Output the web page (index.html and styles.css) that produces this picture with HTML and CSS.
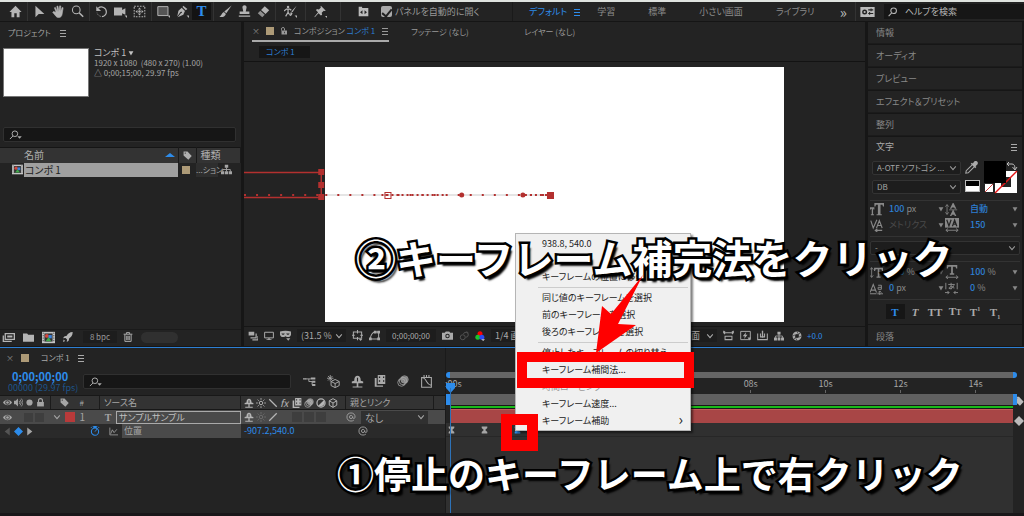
FILE: index.html
```html
<!DOCTYPE html>
<html lang="ja">
<head>
<meta charset="utf-8">
<title>コンポ 1</title>
<link rel="stylesheet" href="styles.css">
</head>
<body>
<svg class="sprite" aria-hidden="true">
  <symbol id="home" viewBox="0 0 16 16"><path d="M8 1 0.500 8.500H3V15H6.500V10h3v5H13V8.500h2.500z"/></symbol>
  <symbol id="arrow" viewBox="0 0 16 16"><path d="M3 1v14l4-4h7z"/></symbol>
  <symbol id="hand" viewBox="0 0 16 16"><path d="M5 9 3 3.500l1-.7L6.500 8 6 1.500l1.300-.2L8.500 8 9.500 1l1.300.2L10.500 8 12.500 3l1.200.4L12.500 11c-.5 3-1.500 4-4 4.500C6 15.500 5 14 3.800 12.500L.8 9l1-1z" stroke="currentColor" stroke-width=".7"/></symbol>
  <symbol id="zoom" viewBox="0 0 16 16"><g fill="none" stroke="currentColor"><circle cx="6.500" cy="6" r="4.700" stroke-width="1.300"/><path d="m10 9.500 5 5" stroke-width="2"/></g></symbol>
  <symbol id="rotate" viewBox="0 0 16 16"><path d="M4 4a6 6 0 0 1 10 4.500c0 3-2.500 5.700-5.500 5.700" fill="none" stroke="currentColor" stroke-width="1.500"/><path d="M1.500 1.500v6h6z"/><path d="M7 14c-2-.5-4-2-4.500-4.500" fill="none" stroke="currentColor" stroke-dasharray="1.500 1.500"/></symbol>
  <symbol id="camera" viewBox="0 0 16 16"><path d="M0 3h10v3l4-2v8l-4-2v3H0zM13 13h3v3z"/></symbol>
  <symbol id="anchor" viewBox="0 0 16 16"><path d="M1.500 1.500h13v13h-13z" fill="none" stroke="currentColor" stroke-dasharray="2 1.500" stroke-width="1.300"/><path d="m8 3 2 2.500H6zM8 13l2-2.500H6zM3 8l2.500-2v4zM13 8l-2.500-2v4z"/><circle cx="8" cy="8" r="1.500"/></symbol>
  <symbol id="rect" viewBox="0 0 16 16"><path d="M1 2h12.500v11H1z" fill="#555" stroke="currentColor" stroke-width="1.200"/><path d="M13 13h3v3z"/></symbol>
  <symbol id="pen" viewBox="0 0 16 16"><path d="m9 1 5 4-2 1.500-4-4zM7 3.500l4 4L9 12l-7 3 4-5 1.500-.5-1-1.500-1.200.8L1.500 14 3 7z"/><path d="M13 13h3v3z"/></symbol>
  <symbol id="brush" viewBox="0 0 16 16"><path d="M15.500.5 9 10 6.500 8zM6 8.500 8.500 11C7 14.500 4 15.500.5 14.500 3 13 3 10 6 8.500z"/></symbol>
  <symbol id="stamp" viewBox="0 0 16 16"><path d="M6.500 8 5.500 3.500a2.600 2.600 0 1 1 5 0L9.500 8H14v3H2V8zM1 13h14v1.500H1z"/></symbol>
  <symbol id="eraser" viewBox="0 0 16 16"><path d="m9.500 1.500 5.500 5-4.500 4.500L5 6z"/><path d="m4 7 5.500 5-3 3L1 10z" opacity=".75"/></symbol>
  <symbol id="roto" viewBox="0 0 16 16"><path d="M15.500 1 10.500 9 9 8zM8.500 8.500l2 1.500c-.5 2.500-2 3.500-4 3.500 1.500-1 1-3.500 2-5zM13 13h3v3z"/><circle cx="5" cy="2.500" r="1.500"/><path d="M0 7.500 3 5h4l2 1.500M5 5v4l-3 5M5 9l2 3" fill="none" stroke="currentColor" stroke-width="1.500"/></symbol>
  <symbol id="pin" viewBox="0 0 16 16"><path d="m8.500 1 6 6-1.500.5-1-.5-2.500 2.500.5 2.500-1.500 1L5.500 10 1 15l-.5-.5L5 9 2.500 6.500l1-1.500L6 5.500 8.500 3 8 2zM13.500 13.500H16V16z"/></symbol>
  <symbol id="snap" viewBox="0 0 16 16"><path d="M1 1h5v2h9v12H1z"/><path d="M6.500 6v6L3 9zM9.500 6v6L13 9z" fill="#232323"/></symbol>
  <symbol id="menu" viewBox="0 0 8 8"><path d="M1 1h6v1H1zM1 4h6v1H1zM1 7h6v1H1z"/></symbol>
  <symbol id="card" viewBox="0 0 20 14"><path d="M0 0h20v14H0z"/><circle cx="6" cy="7" r="2.500" fill="none" stroke="#232323" stroke-width="2"/><path d="M11 4h7M11 9h7M15 2v4M13 7v4" stroke="#232323" stroke-width="1.500"/></symbol>
  <symbol id="search" viewBox="0 0 16 16"><g fill="none" stroke="currentColor" stroke-width="1.700"><circle cx="9" cy="6" r="4.500"/><path d="m6 9.500-5 5"/></g></symbol>
  <symbol id="searchd" viewBox="0 0 20 16"><g fill="none" stroke="currentColor" stroke-width="1.600"><circle cx="9" cy="6" r="4.500"/><path d="m6 9.500-5 5"/></g><path d="M13 10h7l-3.500 4z"/></symbol>
  <symbol id="lock" viewBox="0 0 16 16"><path d="M2 7h12v8H2z"/><path d="M4.500 7V4.500a3.500 3.500 0 0 1 7 0V7" fill="none" stroke="currentColor" stroke-width="2"/></symbol>
  <symbol id="unlock" viewBox="0 0 16 16"><path d="M3 7h11v8H3z"/><path d="M3 7V4.500a3 3 0 0 1 6-1V7" fill="none" stroke="currentColor" stroke-width="2"/><path d="M8 9.500h1.500v3H8z" fill="#232323"/></symbol>
  <symbol id="tag" viewBox="0 0 16 16"><path fill-rule="evenodd" d="M1 1h7l7.500 8-6 6.500L1 8zm3 1.500a1.200 1.200 0 1 0 0 2.500 1.200 1.200 0 0 0 0-2.500z"/></symbol>
  <symbol id="comp" viewBox="0 0 16 16"><path d="M0 1h16v14H0z" fill="#c4c4c4"/><path d="M1.500 2v12M14.500 2v12" stroke="#333" stroke-dasharray="1.500 1.500"/><path d="M3 3h10v10H3z" fill="#333"/><circle cx="6" cy="6" r="2.400" fill="#d5493f"/><path d="M8 5h4v4H8z" fill="#3b82dd"/><path d="m8 7.500 3.500 5h-7z" fill="#40a94b"/></symbol>
  <symbol id="tree" viewBox="0 0 16 16"><path d="M5.500 1h5v4.500h-5zM0 10.500h4.700V15H0zM5.700 10.500h4.600V15H5.700zM11.300 10.500H16V15h-4.700z"/><path d="M8 5v6M2.500 11V8h11v3" fill="none" stroke="currentColor" stroke-width="1.300"/></symbol>
  <symbol id="footage" viewBox="0 0 20 16"><path d="M5 2h14v9H5z" fill="none" stroke="currentColor" stroke-width="2"/><path d="M3 5v8h12v1.800H1V5zM8 5h8v3H8z"/></symbol>
  <symbol id="folder" viewBox="0 0 16 16"><path d="M0 2h6l1.500 2H16v10H0z"/></symbol>
  <symbol id="rocket" viewBox="0 0 16 16"><path d="M15.500 0c-5 0-8 3-9.500 6L2 7l-2 3 4-.5 2.500 2.500L6 16l3-2 1-4c3-1.500 5.500-5 5.500-10zM1 12l2.500 2.500L0 16z"/></symbol>
  <symbol id="trash" viewBox="0 0 16 16"><path d="M1 3.500h14M5.500 3V1h5v2M3 4v11h10V4M6 6v7M8 6v7M10 6v7" fill="none" stroke="currentColor" stroke-width="1.500"/></symbol>
  <symbol id="frames" viewBox="0 0 16 16"><path d="M1 1h9v6H1zM12 4v6H4v1.800h10V4zM15 8v5H7v2h9V8z"/></symbol>
  <symbol id="monitor" viewBox="0 0 16 16"><path d="M1 2h14v9H1z" fill="none" stroke="currentColor" stroke-width="1.600"/><path d="M7 11h2v2h3v1.500H4V13h3z"/></symbol>
  <symbol id="mask" viewBox="0 0 16 16"><path fill-rule="evenodd" d="M0 2c5-1 11-1 16 0v5c-1 4-5 4-8 2-3 2-7 2-8-2zm2 3c1 2.500 4 2.500 5 0zm7 0c1 2.500 4 2.500 5 0zM9 12h6l-3 3.500z"/></symbol>
  <symbol id="grid" viewBox="0 0 16 16"><path d="M2 3h12v9H2zM8 0v5M8 10v5M0 7.500h4M12 7.500h4" fill="none" stroke="currentColor" stroke-width="1.500"/><path d="M10 13h5l-2.500 3z"/></symbol>
  <symbol id="shape" viewBox="0 0 16 16"><path d="M2 13C2 8 5 3 9 3h5v10z" fill="none" stroke="currentColor" stroke-width="1.500"/><path d="M0 11h4v4H0zM7 1h4v4H7zM12 1h4v4h-4zM12 11h4v4h-4z"/></symbol>
  <symbol id="photo" viewBox="0 0 16 16"><path fill-rule="evenodd" d="M0 4h4l1.500-2h5L12 4h4v10H0zm8 1.500a3.200 3.200 0 1 0 0 6.500 3.200 3.200 0 0 0 0-6.500z"/><circle cx="8" cy="8.700" r="1.700"/></symbol>
  <symbol id="chain" viewBox="0 0 16 16"><g fill="none" stroke="currentColor" stroke-width="1.600"><circle cx="6" cy="10" r="4"/><path d="M7 5a4 4 0 1 1 4 5M12 1l3 2"/></g></symbol>
  <symbol id="rgb" viewBox="0 0 16 16"><circle cx="8" cy="4.500" r="4" fill="#f00"/><circle cx="4.500" cy="10" r="4" fill="#1bc52a"/><circle cx="11" cy="10" r="4" fill="#2b49f0"/><path d="M10 13h6l-3 3z" fill="#ccc"/></symbol>
  <symbol id="chev" viewBox="0 0 10 10"><path d="m1.500 3 3.500 4 3.500-4" fill="none" stroke="currentColor" stroke-width="1.300"/></symbol>
  <symbol id="aspect" viewBox="0 0 16 16"><path d="M1 4h14M3 2 1 4l2 2M13 2l2 2-2 2M3 9h10v5H3zM1 1v3M15 1v3" fill="none" stroke="currentColor" stroke-width="1.500"/></symbol>
  <symbol id="fast" viewBox="0 0 16 16"><path d="M1 2h14v12H1z" fill="none" stroke="currentColor" stroke-width="1.400"/><path d="m9 3-5 6h3l-1 4 5-6H8zM11 11h5l-2.500 4z"/></symbol>
  <symbol id="flow" viewBox="0 0 16 16"><path d="M1 5v9h14V5M5 5v5h6V5" fill="none" stroke="currentColor" stroke-width="1.500"/><path d="M7 1h2v10H7z"/></symbol>
  <symbol id="iris" viewBox="0 0 16 16"><circle cx="8" cy="8" r="5.200" fill="none" stroke="currentColor" stroke-width="4"/><path d="m8 1 3 5M15 8l-4.500 2M8 15l-3-5M1 8l4.500-2M13 3l-3 3M3 13l3-3" stroke="#232323"/></symbol>
  <symbol id="flowchart" viewBox="0 0 20 16"><path d="M0 3h5v2H0zM12 2h7v3h-7zM14 7h5v3h-5zM14 12h5v3h-5z"/><path d="M4 4h8M9 4v4h5M14 8v5" fill="none" stroke="currentColor" stroke-width="1.400"/></symbol>
  <symbol id="draft" viewBox="0 0 16 16"><path d="M10 5.500 15 8v5l-5 2.500L5 13V8zM5 8l5 2.500L15 8M10 10.500v5" fill="none" stroke="currentColor" stroke-width="1.200"/><path d="M4 0v8M0 4h8M1.200 1.200l5.600 5.600M6.800 1.200 1.200 6.800" stroke="currentColor"/></symbol>
  <symbol id="shy" viewBox="0 0 16 16"><path fill-rule="evenodd" d="M1 10V8l3-1c0-4 1.500-6 4-6s4 2 4 6l3 1v2H9v4h5v1.500H2V14h5v-4zM7.300 3.500V8h1.400V3.500z"/></symbol>
  <symbol id="blend" viewBox="0 0 16 16"><path fill-rule="evenodd" d="M5 0h10v12H5zm1.500 2v2h1.700V2zm5.500 0v2h1.700V2zM6.500 7v2h1.700V7zm5.500 0v2h1.700V7zM1 4h2.500v10H12v1.800H1z"/></symbol>
  <symbol id="blur" viewBox="0 0 16 16"><circle cx="10" cy="6" r="4.500" opacity=".75"/><g fill="none" stroke="currentColor"><circle cx="10" cy="6" r="5"/><circle cx="8" cy="8" r="5"/><circle cx="6" cy="10" r="5"/></g></symbol>
  <symbol id="graph" viewBox="0 0 16 16"><path d="M2 3h12v12H2zM2 3c4 0 5 3 6 5s3 4 6 5M5 0v3M8 0v3M11 0v3" fill="none" stroke="currentColor" stroke-width="1.300"/></symbol>
  <symbol id="eye" viewBox="0 0 16 16"><path fill-rule="evenodd" d="M0 8c4-6.500 12-6.500 16 0-4 6.500-12 6.500-16 0zm8-4a4 4 0 1 0 0 8 4 4 0 0 0 0-8z"/><circle cx="8" cy="8" r="2.400"/></symbol>
  <symbol id="speaker" viewBox="0 0 16 16"><path d="M0 5h3l4-4v14l-4-4H0z"/><path d="M9 5q2.500 3 0 6M11 3q4 5 0 10M13 1q5.500 7 0 14" fill="none" stroke="currentColor" stroke-width="1.400"/></symbol>
  <symbol id="dot" viewBox="0 0 16 16"><circle cx="8" cy="8" r="5.500"/></symbol>
  <symbol id="sun" viewBox="0 0 16 16"><circle cx="8" cy="8" r="2.800" fill="none" stroke="currentColor" stroke-width="1.500"/><path d="M8 0v3M8 13v3M0 8h3M13 8h3M2.500 2.500l2 2M11.500 11.500l2 2M13.500 2.500l-2 2M4.500 11.500l-2 2" stroke="currentColor" stroke-width="1.300"/></symbol>
  <symbol id="back" viewBox="0 0 16 16"><path d="m2 2 12 12" stroke="currentColor" stroke-width="2"/></symbol>
  <symbol id="slash" viewBox="0 0 16 16"><path d="M2 14 14 2" stroke="currentColor" stroke-width="2"/></symbol>
  <symbol id="half" viewBox="0 0 16 16"><circle cx="8" cy="8" r="6.500" fill="none" stroke="currentColor" stroke-width="2"/><path d="M12.500 3.500A6.500 6.500 0 0 1 3.500 12.500z"/></symbol>
  <symbol id="cube" viewBox="0 0 16 16"><path d="m8 1 6 3.500v7L8 15l-6-3.500v-7zM2 4.500 8 8l6-3.500M8 8v7" fill="none" stroke="currentColor" stroke-width="1.500"/></symbol>
  <symbol id="whip" viewBox="0 0 16 16"><path d="M10.500 8a2.500 2.500 0 1 1-2.500-2.500c2 0 3 1.500 3 3.500s3.500 2 3.500-1C14.500 4 12 1.500 8 1.500S1.500 4 1.500 8 4 14.500 8 14.500c2 0 3-.5 4.500-1.500" fill="none" stroke="currentColor" stroke-width="1.400"/></symbol>
  <symbol id="watch" viewBox="0 0 16 16"><circle cx="8" cy="9" r="5.800" fill="none" stroke="currentColor" stroke-width="1.700"/><path d="M6 0h4v2.500H6zM8 9l4-5M1.500 3l2-2M12.500 1l2 2" stroke="currentColor" stroke-width="1.500"/></symbol>
  <symbol id="plot" viewBox="0 0 16 16"><path d="M1.500 1v13H16M3 12l3-7 3 5 5-6" fill="none" stroke="currentColor" stroke-width="1.400"/></symbol>
  <symbol id="left" viewBox="0 0 16 16"><path d="M12 1v14L3 8z"/></symbol>
  <symbol id="right" viewBox="0 0 16 16"><path d="M4 1v14l9-7z"/></symbol>
  <symbol id="diamond" viewBox="0 0 16 16"><path d="m8 0 8 8-8 8-8-8z"/></symbol>
  <symbol id="down" viewBox="0 0 10 10"><path d="M1 2h8L5 9z"/></symbol>
  <symbol id="key" viewBox="0 0 10 10"><path d="M1 0h8v2L6 5l3 3v2H1V8l3-3-3-3z"/></symbol>
  <symbol id="dropper" viewBox="0 0 16 16"><path d="M12 0c3-.5 4.500 1.500 3.500 4L13 6.500l1 1L12.500 9 7 3.500 8.500 2l1 1z"/><path d="m8.500 5-7 7L1 15l3-.5 7-7" fill="none" stroke="currentColor" stroke-width="1.300"/></symbol>
  <symbol id="sizeT" viewBox="0 0 16 16"><path d="M5 1h11v4h-1.200l-.6-2H12v11h1.500v1h-6v-1H9V3H6.800l-.6 2H5zM0 6h5v2.500H4L3.500 7.500V14h1v1H1v-1h1V7.500L1 8.500H0z"/></symbol>
  <symbol id="leading" viewBox="0 0 16 16"><path d="M6 7 9.500 0h1L14 7h-2l-.7-1.500H8.500L8 7zM6 16l3.500-7h1l3.500 7h-2l-.7-1.500H8.500L8 16zM5 8h10v1H5z"/><path d="M2.500 2v12M.5 4.500l2-2.500 2 2.500M.5 11.500l2 2.500 2-2.500" fill="none" stroke="currentColor"/></symbol>
  <symbol id="kern" viewBox="0 0 16 16"><path d="M1 2l3 9 4.500-10M8 11l3.500-9 3.500 9M9 8h5M7 14h8M9 12l-2.500 2L9 16" fill="none" stroke="currentColor" stroke-width="1.400"/></symbol>
  <symbol id="track" viewBox="0 0 16 16"><path d="M0 0h16v11H0z"/><path d="m2 2 2.500 7L7 2M8.500 9.500l2.500-7 2.500 7M9.500 7h3" fill="none" stroke="#232323" stroke-width="1.400"/><path d="M1 14h14M3.500 12 1 14l2.500 2M12.500 12l2.500 2-2.500 2" fill="none" stroke="currentColor"/></symbol>
  <symbol id="scaleV" viewBox="0 0 16 16"><path d="M5 2h11v4h-1.200l-.8-2h-2.500v9H13v1.500H8V13h1.500V4H7L6.200 6H5z"/><path d="M2 2v12M0 4.500 2 2l2 2.500M0 11.500 2 14l2-2.500" fill="none" stroke="currentColor"/></symbol>
  <symbol id="scaleH" viewBox="0 0 16 16"><path d="M2 0h12v4h-1.200l-.8-2H9v7.500h1.500V11h-5V9.500H7V2H4l-.8 2H2z"/><path d="M1 14h14M3.500 12 1 14l2.500 2M12.500 12l2.500 2-2.500 2" fill="none" stroke="currentColor"/></symbol>
  <symbol id="shift" viewBox="0 0 16 16"><path d="M0 13 4 3l4 10M1.500 10h5M0 14.500h8" fill="none" stroke="currentColor" stroke-width="1.300"/><path d="M10 4h4v5h-4V6.500h4M12 11v5M10 13l2-2 2 2M9 14.500h7" fill="none" stroke="currentColor" stroke-width="1.200"/></symbol>
  <symbol id="tsume" viewBox="0 0 16 16"><path d="M1 1v8M15 1v8M4 3h8M7.500 1v8M11 4c-1 3-3 5-6 4 0-3 6-4 6 0M0 13h5M11 13h5M3 11l2 2-2 2M13 11l-2 2 2 2" fill="none" stroke="currentColor" stroke-width="1.200"/></symbol>
</svg>

<header class="toolbar">
  <div class="tools narrow"><button class="tool" aria-label="ホーム"><svg><use href="#home"/></svg></button></div>
  <div class="tools">
    <button class="tool" aria-label="選択"><svg><use href="#arrow"/></svg></button>
    <button class="tool" aria-label="手のひら"><svg><use href="#hand"/></svg></button>
    <button class="tool" aria-label="ズーム"><svg><use href="#zoom"/></svg></button>
  </div>
  <div class="tools">
    <button class="tool" aria-label="回転"><svg><use href="#rotate"/></svg></button>
    <button class="tool" aria-label="カメラ"><svg><use href="#camera"/></svg></button>
    <button class="tool" aria-label="アンカーポイント"><svg><use href="#anchor"/></svg></button>
  </div>
  <div class="tools">
    <button class="tool" aria-label="長方形"><svg><use href="#rect"/></svg></button>
    <button class="tool" aria-label="ペン"><svg><use href="#pen"/></svg></button>
    <button class="tool tool-on">T</button>
  </div>
  <div class="tools">
    <button class="tool" aria-label="ブラシ"><svg><use href="#brush"/></svg></button>
    <button class="tool" aria-label="スタンプ"><svg><use href="#stamp"/></svg></button>
    <button class="tool" aria-label="消しゴム"><svg><use href="#eraser"/></svg></button>
  </div>
  <div class="tools single"><button class="tool" aria-label="ロトブラシ"><svg><use href="#roto"/></svg></button></div>
  <div class="tools last"><button class="tool" aria-label="パペットピン"><svg><use href="#pin"/></svg></button></div>
  <div class="options">
    <svg class="i11"><use href="#snap"/></svg>
    <label class="check"><input type="checkbox" checked>パネルを自動的に開く</label>
  </div>
  <nav class="workspaces">
    <a href="#" class="ws-on">デフォルト <svg class="i8"><use href="#menu"/></svg></a>
    <a href="#">学習</a><a href="#">標準</a><a href="#">小さい画面</a><a href="#">ライブラリ</a><a href="#" class="more">»</a>
  </nav>
  <svg class="card"><use href="#card"/></svg>
  <label class="help"><svg class="i10"><use href="#search"/></svg><input type="text" value="ヘルプを検索" aria-label="ヘルプを検索"></label>
</header>

<main class="panels">
  <section class="project">
    <h2 class="title">プロジェクト <svg class="i8"><use href="#menu"/></svg></h2>
    <div class="summary">
      <div class="thumb"></div>
      <div class="facts"><strong>コンポ 1<svg class="i6"><use href="#down"/></svg></strong><span>1920 x 1080  (480 x 270) (1.00)</span><span>△ 0;00;15;00, 29.97 fps</span></div>
    </div>
    <label class="find find-project"><svg class="searchd"><use href="#searchd"/></svg><input type="text" aria-label="プロジェクト内を検索"></label>
    <table class="files">
      <thead><tr><th class="c-icon"></th><th class="c-name"><span>名前<i class="sort"></i></span></th><th class="c-tag"><svg class="i9"><use href="#tag"/></svg></th><th colspan="2">種類</th></tr></thead>
      <tbody><tr><td class="c-icon"><svg class="i11"><use href="#comp"/></svg></td><td class="picked">コンポ 1</td><td class="c-tag"><i class="chip"></i></td><td class="c-kind">...ション</td><td class="c-tree"><svg class="i11"><use href="#tree"/></svg></td></tr></tbody>
    </table>
    <footer class="project-bar">
      <svg class="wide"><use href="#footage"/></svg><svg class="i11"><use href="#folder"/></svg><svg class="i13"><use href="#comp"/></svg><svg class="i10"><use href="#rocket"/></svg>
      <button class="bpc">8 bpc</button><svg class="i10"><use href="#trash"/></svg><span class="pill"></span>
    </footer>
  </section>

  <section class="viewer">
    <div class="tabs">
      <div class="tab tab-on"><button class="x">×</button><i class="chip"></i><svg class="i8"><use href="#unlock"/></svg><span>コンポジション <b>コンポ 1</b></span><svg class="i8"><use href="#menu"/></svg></div>
      <div class="tab">フッテージ (なし)</div><div class="tab">レイヤー (なし)</div>
    </div>
    <div class="crumbs"><button class="crumb">コンポ 1</button></div>
    <div class="stage">
      <div class="frame"></div>
      <svg class="motion" viewBox="0 0 619 266" preserveAspectRatio="xMidYMid slice">
        <g fill="none" stroke="#b3302f"><path d="M0 111.500H77V136.500H0" stroke-width="1.500"/><path d="M81 134H306" stroke="#ccc"/><path d="M0 134H80M81 134H306" stroke-width="2" stroke-dasharray="2 10"/><path d="M137 134H200M280 134H305" stroke-width="2" stroke-dasharray="2 3"/><path d="M140.500 131.500h6v6h-6z"/></g>
        <path d="M74 108h6v6h-6zM74 121h6v6h-6zM74 133h6v6h-6zM302 131h7v7h-7z" fill="#b3302f"/><circle cx="217" cy="134" r="2.500" fill="#b3302f"/><circle cx="278" cy="134" r="2.500" fill="#b3302f"/>
      </svg>
    </div>
    <footer class="view-bar">
      <svg class="i10"><use href="#frames"/></svg><svg class="i10"><use href="#monitor"/></svg><svg class="i11"><use href="#mask"/></svg>
      <span class="pick zoompick"><select aria-label="拡大率"><option>(31.5 %)</option></select><svg><use href="#chev"/></svg></span>
      <svg class="i11"><use href="#grid"/></svg><svg class="i11"><use href="#shape"/></svg>
      <button class="time">0;00;00;00</button>
      <svg class="i11"><use href="#photo"/></svg><svg class="i10 off"><use href="#chain"/></svg><svg class="i10"><use href="#rgb"/></svg>
      <span class="pick quality"><select aria-label="解像度"><option>1/4 画質</option></select></span>
      <span class="pick views"><select aria-label="ビュー"><option>1 画面</option></select><svg><use href="#chev"/></svg></span>
      <svg class="i11"><use href="#aspect"/></svg><svg class="i11"><use href="#fast"/></svg><svg class="i11"><use href="#flow"/></svg><svg class="i10"><use href="#tree"/></svg>
      <svg class="i10 iris"><use href="#iris"/></svg><span class="blue exposure">+0.0</span>
    </footer>
  </section>

  <aside class="side">
    <h2 class="fold">情報</h2><h2 class="fold">オーディオ</h2><h2 class="fold">プレビュー</h2><h2 class="fold">エフェクト＆プリセット</h2><h2 class="fold">整列</h2>
    <div class="chars">
      <h2 class="fold open">文字 <svg class="i8"><use href="#menu"/></svg></h2>
      <div class="fontrow">
        <div class="fonts">
          <span class="pick boxed"><select aria-label="フォント"><option>A-OTF ソフトゴシ ...</option></select><svg><use href="#chev"/></svg></span>
          <span class="pick boxed"><select aria-label="スタイル"><option>DB</option></select><svg><use href="#chev"/></svg></span>
        </div>
        <div class="inks"><svg class="i13"><use href="#dropper"/></svg><i class="bw"></i></div>
        <svg class="swatch" viewBox="0 0 34 33"><path d="M11 10h22v22H11z" fill="#fff"/><path d="M17 16h10v10H17z" fill="#222"/><path d="M11 32 33 10" stroke="#e31414" stroke-width="1.500"/><path d="M0 0h22v22H0z" fill="#000"/><path d="M1 23h8v8H1z" fill="#fff"/><path d="m1 31 8-8" stroke="#c44"/><path d="M24 3h4q3 0 3 5M25 1l-2 2 2 2M28.500 6l2.500 3 2-3" fill="none" stroke="#bbb"/></svg>
      </div>
      <div class="metrics">
        <svg class="i14"><use href="#sizeT"/></svg><span><b>100</b> px</span><svg class="i6"><use href="#down"/></svg><svg class="i13"><use href="#leading"/></svg><span><b>自動</b></span><svg class="i6"><use href="#down"/></svg>
        <svg class="i13"><use href="#kern"/></svg><span class="dim">メトリクス</span><svg class="i6"><use href="#down"/></svg><svg class="i14"><use href="#track"/></svg><span><b>150</b></span><svg class="i6"><use href="#down"/></svg>
      </div>
      <div class="strokes"><span class="pick boxed"><select aria-label="線の順序"><option>-</option></select><svg><use href="#chev"/></svg></span></div>
      <div class="metrics">
        <svg class="i13"><use href="#scaleV"/></svg><span><b>100</b> %</span><svg class="i6"><use href="#down"/></svg><svg class="i14"><use href="#scaleH"/></svg><span><b>100</b> %</span><svg class="i6"><use href="#down"/></svg>
        <svg class="i13"><use href="#shift"/></svg><span><b>0</b> px</span><svg class="i6"><use href="#down"/></svg><svg class="i13"><use href="#tsume"/></svg><span><b>0</b> %</span><svg class="i6"><use href="#down"/></svg>
      </div>
      <div class="styles"><button class="st-on">T</button><button class="italic">T</button><button>TT</button><button>T<small>T</small></button><button>T<sup>1</sup></button><button>T<sub>1</sub></button></div>
    </div>
    <h2 class="fold">段落</h2>
  </aside>
</main>

<section class="timeline">
  <div class="layers">
    <div class="tl-tab"><button class="x">×</button><i class="chip"></i><span>コンポ 1</span><svg class="i8"><use href="#menu"/></svg></div>
    <div class="tl-head">
      <div class="clock"><strong>0;00;00;00</strong><span>00000 (29.97 fps)</span></div>
      <label class="find find-layer"><svg class="searchd"><use href="#searchd"/></svg><input type="text" aria-label="レイヤーを検索"></label>
      <div class="modes"><svg class="i13"><use href="#flowchart"/></svg><svg class="i13"><use href="#draft"/></svg><svg class="i13"><use href="#shy"/></svg><svg class="i12"><use href="#blend"/></svg><svg class="i12"><use href="#blur"/></svg><svg class="i13"><use href="#graph"/></svg></div>
    </div>
    <div class="row cols">
      <div class="cell av"><svg><use href="#eye"/></svg><svg><use href="#speaker"/></svg><svg><use href="#dot"/></svg><svg><use href="#lock"/></svg></div>
      <div class="cell num"><svg class="i9"><use href="#tag"/></svg><span>#</span></div>
      <div class="cell src">ソース名</div>
      <div class="cell sw"><svg><use href="#shy"/></svg><svg><use href="#sun"/></svg><svg><use href="#back"/></svg><em>fx</em><svg><use href="#blend"/></svg><svg><use href="#blur"/></svg><svg><use href="#half"/></svg><svg><use href="#cube"/></svg></div>
      <div class="cell par">親とリンク</div>
    </div>
    <div class="row layer">
      <div class="cell av"><svg><use href="#eye"/></svg><i></i><i></i></div>
      <div class="cell num"><svg class="i8"><use href="#chev"/></svg><i class="red"></i><span>1</span></div>
      <div class="cell name"><b>T</b><input type="text" value="サンプルサンプル" aria-label="レイヤー名"></div>
      <div class="cell sw"><svg><use href="#shy"/></svg><svg class="off"><use href="#sun"/></svg><svg><use href="#slash"/></svg><i class="gap"></i><i></i><i></i><i></i></div>
      <div class="cell link"><svg class="i10"><use href="#whip"/></svg><span class="pick"><select aria-label="親とリンク"><option>なし</option></select><svg><use href="#chev"/></svg></span></div>
    </div>
    <div class="row prop">
      <div class="cell av"><svg class="off"><use href="#left"/></svg><svg class="blue"><use href="#diamond"/></svg><svg><use href="#right"/></svg></div>
      <div class="cell watch"><svg class="i10 blue"><use href="#watch"/></svg></div>
      <div class="cell name"><svg class="i9"><use href="#plot"/></svg><span class="pos">位置</span></div>
      <div class="cell blue val">-907.2,540.0</div>
      <div class="cell whip"><svg class="i10"><use href="#whip"/></svg></div>
    </div>
  </div>
  <div class="tracks">
    <div class="navbar"></div>
    <div class="ruler"><span>:00s</span><span>02s</span><span>04s</span><span>06s</span><span>08s</span><span>10s</span><span>12s</span><span>14s</span></div>
    <div class="work"></div>
    <div class="cache"></div>
    <div class="bar"></div>
    <div class="keys"><svg><use href="#key"/></svg><svg><use href="#key"/></svg><svg class="blue"><use href="#key"/></svg></div>
    <div class="empty"></div>
    <svg class="head" viewBox="0 0 9 10"><path d="M0 0h9v5L4.500 10 0 5z" fill="#2d8ceb"/></svg>
    <i class="needle"></i>
  </div>
  <div class="gutter"><svg class="i10"><use href="#tag"/></svg><svg class="i10"><use href="#diamond"/></svg></div>
</section>

<div class="popup" role="menu">
  <button>938.8, 540.0</button><i class="blank"></i><button>キーフレームの位置に移動</button><hr>
  <button>同じ値のキーフレームを選択</button><button>前のキーフレームを選択</button><button>後ろのキーフレームを選択</button><hr>
  <button>停止したキーフレームの切り替え</button><button>キーフレーム補間法...</button><button disabled>時間ロービング</button><button>キーフレーム速度...</button><button>キーフレーム補助<span>›</span></button>
</div>
<i class="mark mark-item"></i>
<i class="mark mark-key"></i>
<p class="callout callout-two">②キーフレーム補完法をクリック</p>
<svg class="pointer" viewBox="0 0 48 78"><path d="M47 0 22 49l18 1L0 78 6 31l9 8z" fill="#f00"/></svg>
<p class="callout callout-one">①停止のキーフレーム上で右クリック</p>
</body>
</html>
```

FILE: styles.css
```css
* { box-sizing: border-box; }
body {
  margin: 0;
  min-height: 100vh;
  position: relative;
  display: flex;
  flex-direction: column;
  overflow: hidden;
  background: #181818;
  color: #a5a5a5;
  font: 10px/14px "Noto Sans CJK JP", sans-serif;
  font-feature-settings: "palt";
}
svg { display: block; flex: none; fill: currentColor; }
button, input, select { font: inherit; font-feature-settings: inherit; color: inherit; background: none; border: 0; padding: 0; margin: 0; appearance: none; min-width: 0; outline: 0; }
a { color: inherit; text-decoration: none; }
h2, p { margin: 0; font-size: inherit; font-weight: 400; }
i { font-style: normal; flex: none; }
.sprite { position: absolute; width: 0; height: 0; }
.i6 { width: 6px; height: 6px; }
.i8 { width: 8px; height: 8px; }
.i9 { width: 9px; height: 9px; }
.i10 { width: 10px; height: 10px; }
.i11 { width: 11px; height: 11px; }
.i12 { width: 12px; height: 12px; }
.i13 { width: 13px; height: 13px; }
.i14 { width: 14px; height: 14px; }
.blue { color: #2d8ceb; }
.off { opacity: .35; }
.chip { display: block; width: 8px; height: 8px; background: #ad9a77; }

/* toolbar */
.toolbar { display: flex; height: 22px; border-top: 2px solid #dfe3df; border-bottom: 1px solid #151515; background: #232323; align-items: stretch; }
.tools { display: flex; align-items: center; padding: 0 2px; border-right: 1px solid #333; }
.narrow { padding-left: 6px; }
.single { padding: 0 5px; }
.last { padding: 0 10px 0 5px; }
.tool { width: 19px; height: 17px; display: grid; place-items: center; color: #b4b4b4; }
.tool svg { width: 13px; height: 13px; }
.tool-on { background: #131313; color: #2d8ceb; font: 700 15px/17px "Liberation Serif", serif; }
.options { display: flex; align-items: center; gap: 12px; padding-left: 17px; width: 172px; flex: none; border-right: 1px solid #1a1a1a; white-space: nowrap; color: #bbb; }
.options .check { color: #999; }
.check { display: flex; align-items: center; gap: 3px; font-size: 9px; }
.check input { width: 11px; height: 11px; border-radius: 2px; background: #aaa; display: grid; place-items: center; }
.check input:checked::after { content: ""; width: 4px; height: 8px; border: solid #222; border-width: 0 2px 2px 0; transform: rotate(40deg); }
.workspaces { flex: 1; display: flex; align-items: center; gap: 33px; padding: 0 8px 0 16px; white-space: nowrap; font-size: 9px; color: #8c8c8c; border-right: 1px solid #333; }
.ws-on { display: flex; align-items: center; gap: 6px; color: #2d8ceb; margin-right: -17px; }
.more { font-size: 15px; color: #bbb; margin-left: -8px; }
.card { width: 15px; height: 10px; margin: 5px 9px 5px 4px; color: #bbb; }
.help { width: 142px; flex: none; margin: 2px 0; padding: 0 4px; display: flex; align-items: center; gap: 7px; background: #161616; color: #b5b5b5; }
.help input { flex: 1; width: 0; font-size: 9px; }

/* panels */
.panels { display: grid; grid-template-columns: 241px minmax(0, 1fr) 156px; gap: 3px; flex: 1; min-height: 325px; background: #161616; padding-bottom: 1px; }
.panels > section { background: #232323; display: flex; flex-direction: column; min-width: 0; }
.title { display: flex; align-items: center; gap: 8px; font-size: 8px; height: 21px; padding: 0 8px; }
.summary { display: flex; padding: 5px 3px; gap: 5px; }
.thumb { width: 86px; height: 49px; background: #fff; border: 1px solid #777; }
.facts { display: flex; flex-direction: column; font-size: 8px; line-height: 10px; white-space: pre; color: #a5a5a5; }
.facts strong { display: flex; align-items: center; gap: 2px; font-weight: 400; color: #c0c0c0; font-size: 9px; }
.find { display: flex; align-items: center; background: #161616; border: 1px solid #303030; border-radius: 2px; height: 15px; padding-left: 5px; color: #aaa; }
.find input { flex: 1; width: 0; }
.searchd { width: 13px; height: 10px; }
.find-project { margin: 25px 5px 5px 3px; }
.files { width: 100%; border-collapse: collapse; table-layout: fixed; line-height: 14px; }
.files th { font-weight: 400; text-align: left; background: #333; padding: 0 0 0 4px; height: 15px; color: #b0b0b0; border-top: 1px solid #151515; }
.files td { padding: 0 0 0 4px; height: 14px; white-space: nowrap; }
.files .c-icon { width: 24px; padding-left: 12px; }
.c-name span { display: flex; justify-content: space-between; align-items: center; }
.files .c-name { width: 154px; padding: 0 3px 0 0; border-left: 0; }
.files thead .c-name { padding-left: 0; }
.sort { border: solid transparent; border-width: 0 5px 4px; border-bottom-color: #2d8ceb; }
.files .c-tag { width: 18px; }
.files thead tr > * + * { border-right: 1px solid #1a1a1a; }
.files .picked { background: #a0a0a0; color: #222; padding-left: 1px; }
.files .c-kind { background: #2e2e2e; text-align: right; font-size: 8px; padding: 0 1px 0 0; }
.files .c-tree { padding-left: 3px; }
.project-bar { margin-top: auto; display: flex; align-items: center; gap: 8px; height: 17px; color: #b5b5b5; padding: 1px 2px 3px; border-top: 1px solid #1a1a1a; }
.wide { width: 13px; height: 11px; }
.bpc { width: 34px; height: 12px; margin: 0 -2px 0 2px; background: #1d1d1d; font-size: 8px; line-height: 12px; color: #999; }
.pill { width: 37px; height: 11px; border-radius: 6px; background: #303030; }

/* composition viewer */
.tabs { display: flex; height: 20px; gap: 22px; font-size: 8px; padding-left: 8px; color: #999; white-space: nowrap; }
.tab { display: flex; align-items: center; width: 91px; }
.tab-on { width: auto; gap: 6px; border-bottom: 2px solid #aaa; }
.tab b { font-weight: 400; color: #2d7fd3; }
.x { font-size: 8px; color: #888; }
.crumbs { padding: 4px 15px 3px; border-bottom: 1px solid #131313; }
.crumb { display: block; width: 51px; height: 12px; background: #161616; color: #2d7fd3; font-size: 8px; line-height: 12px; text-align: left; padding-left: 7px; }
.stage { position: relative; flex: 1; padding: 5px 13% 4px; display: flex; overflow: hidden; }
.frame { flex: 1; background: #fff; }
.motion { position: absolute; left: 0; top: 0; width: 100%; height: 100%; }
.view-bar { display: flex; align-items: center; gap: 6px; height: 20px; padding: 0 4px 2px; border-top: 1px solid #161616; white-space: nowrap; font-size: 9px; color: #aaa; }
.pick { display: inline-flex; align-items: center; background: #1d1d1d; min-width: 0; }
.pick select { flex: 1; width: 0; height: 13px; line-height: 13px; padding-left: 4px; text-overflow: clip; }
.pick svg { width: 8px; height: 8px; margin: 0 3px; }
.zoompick { width: 49px; }
.time { width: 50px; background: #1d1d1d; line-height: 13px; font-size: 8px; }
.quality { width: 60px; }
.views { flex: 1; max-width: 160px; padding-left: 134px; }
.views select { flex: none; width: 32px; margin-left: -20px; }
.iris { margin-left: 2px; }
.exposure { font-size: 8px; padding-right: 24px; margin-left: -1px; }

/* side panels */
.side { display: flex; flex-direction: column; background: #161616; gap: 1px; padding-right: 2px; }
.fold { background: #232323; font-size: 9px; line-height: 14px; padding: 4px 8px 3px; border-bottom: 1px solid #1b1b1b; color: #888; }
.side > .fold:last-child { flex: 1; padding: 5px 8px 0; border: 0; }
.chars { background: #232323; padding: 0 2px; color: #999; }
.chars > .open { display: flex; align-items: center; justify-content: space-between; padding: 3px 2px 3px 6px; border: 0; color: #aaa; }
.fontrow { display: grid; grid-template-columns: 1fr 15px 34px; gap: 4px; padding: 4px 2px 6px; }
.fonts { display: grid; gap: 4px; }
.boxed { background: #1d1d1d; border: 1px solid #333; border-radius: 2px; font-size: 8px; height: 14px; }
.boxed select { height: 12px; line-height: 12px; color: #a5a5a5; }
.inks { display: flex; flex-direction: column; gap: 6px; color: #aaa; }
.bw { width: 15px; height: 12px; border: 1px solid #bbb; background: linear-gradient(#000 50%, #fff 50%); }
.swatch { width: 34px; height: 33px; }
.metrics { display: grid; grid-template-columns: 14px 52px 6px 15px 50px 6px; column-gap: 1px; justify-content: space-between; row-gap: 2px; border-top: 1px solid #333; padding: 1px 3px 4px 0; align-items: center; font-size: 9px; line-height: 14px; color: #888; }
.metrics span { padding-left: 4px; }
.metrics > :nth-child(6n + 5) { padding-left: 9px; }
.metrics b { font-weight: 500; color: #2d7fd3; }
.metrics .dim { color: #4a4a4a; }
.strokes { border-top: 1px solid #333; padding: 4px 0 6px; display: grid; }
.strokes + .metrics { padding-top: 3px; }
.styles { display: grid; grid-template-columns: repeat(6, 19px); justify-content: center; gap: 1px; border-top: 1px solid #333; padding: 4px 0 5px; }
.styles button { height: 15px; font: 700 11px/14px "Liberation Serif", serif; color: #aaa; }
.styles .st-on { background: #161616; color: #2d8ceb; }
.styles .italic { font-style: italic; }
.styles small { font-size: 8px; }
.styles sup, .styles sub { font-size: 6px; line-height: 0; }

/* timeline */
.timeline { display: grid; grid-template-columns: 446px minmax(0, 1fr) 11px; min-height: 169px; border-top: 1px solid #2d7fd3; background: #232323; border-bottom: 3px solid #191719; }
.layers { display: flex; flex-direction: column; min-width: 0; border-right: 1px solid #1a1a1a; }
.tl-tab { display: flex; align-items: center; gap: 7px; height: 19px; padding-left: 6px; font-size: 8px; color: #aaa; }
.tl-tab span { padding-left: 5px; }
.tl-head { display: flex; align-items: center; height: 28px; padding: 3px 12px 2px 8px; }
.clock { width: 75px; display: flex; flex-direction: column; line-height: 11px; font-size: 9px; color: #1d5389; white-space: nowrap; }
.clock strong { font-size: 11px; font-weight: 700; color: #2d8ceb; padding-left: 4px; }
.find-layer { flex: 1; }
.modes { display: flex; width: 142px; padding-left: 12px; justify-content: space-between; color: #aaa; }
.row { display: grid; grid-template-columns: 51px 49px 141px 105px 1fr; height: 14px; line-height: 14px; align-items: stretch; }
.cell { display: flex; align-items: center; min-width: 0; }
.cols { background: #333; border-top: 1px solid #181818; border-bottom: 1px solid #181818; height: 15px; line-height: 13px; }
.cols .cell { border-right: 1px solid #1b1b1b; }
.av { padding-left: 3px; gap: 2px; }
.av svg, .av i { width: 9px; height: 9px; }
.layer { background: #4a4a4a; }
.layer .av i, .layer .sw i { background: #3e3e3e; }
.layer .av svg + i { margin-left: 10px; }
.num { padding-left: 2px; justify-content: space-between; padding-right: 15px; }
.cols .num { padding-left: 9px; font-size: 8px; }
.red { width: 10px; height: 10px; background: #b83a3a; }
.src { padding-left: 4px; font-size: 9px; }
.sw { padding-left: 3px; gap: 2px; color: #b5b5b5; }
.sw svg, .sw i, .sw em { width: 10px; height: 10px; flex: none; line-height: 10px; }
.layer .sw .gap { background: none; }
.par { padding-left: 4px; margin-right: 11px; font-size: 9px; }
.layer .name b { width: 16px; text-align: center; font: 700 10px/13px "Liberation Serif", serif; }
.name input { flex: 1; height: 13px; border: 1px solid #aaa; padding-left: 2px; font-size: 9px; line-height: 11px; color: #c0c0c0; }
.link { gap: 5px; }
.link .pick { width: 67px; background: #303030; }
.prop { color: #a5a5a5; background: #2a2a2a; }
.watch { justify-content: flex-end; }
.prop .watch { padding-right: 0; }
.prop .name { padding-left: 9px; gap: 4px; }
.pos { flex: 1; background: #4a4a4a; padding-left: 2px; font-size: 9px; align-self: stretch; }
.val { padding-left: 3px; font-size: 9px; }
.whip { padding-left: 12px; }
.tracks { position: relative; display: flex; flex-direction: column; padding-left: 5px; padding-top: 24px; background: #232323; }
.navbar { height: 6px; background: #656565; border: solid #2d8ceb; border-width: 0 4px; border-radius: 4px; margin: 0 -4px 0 -5px; }
.ruler { display: grid; grid-template-columns: minmax(0, 1fr) repeat(7, minmax(0, 2fr)); height: 16px; font-size: 9px; line-height: 12px; text-align: center; }
.ruler span::after { content: ""; display: block; width: 1px; height: 3px; margin: 0 auto; background: #666; }
.ruler span:first-child { text-align: left; margin-left: -6px; }
.ruler span:first-child::after { display: none; }
.work { height: 11px; background: #606060; border: solid #2d8ceb; border-width: 0 4px; margin: 0 -4px 0 -5px; }
.cache { height: 4px; background: #1ab91a; border: solid #181818; border-width: 1px 0; }
.bar { height: 14px; background: #a84646; border-top: 1px solid #c25a5a; }
.keys { display: flex; gap: 26px; align-items: center; height: 14px; background: #303030; border-bottom: 1px solid #272727; margin-left: -5px; padding-left: 2px; }
.keys svg { width: 7px; height: 8px; }
.empty { flex: 1; background: #303030; margin-left: -5px; }
.head { position: absolute; left: 0; top: 35px; width: 9px; height: 10px; }
.needle { position: absolute; left: 4px; top: 40px; bottom: 0; width: 1px; background: #2d72b8; }
.gutter { padding-top: 48px; display: flex; flex-direction: column; align-items: flex-end; gap: 10px; color: #bbb; }

/* floating menu and annotations */
.popup { position: absolute; left: 515px; top: 233px; width: 176px; padding: 1px 2px; background: #f0f0f0; border: 1px solid #b5b5b5; box-shadow: 2px 2px 2px rgba(0, 0, 0, .5); color: #222; display: flex; flex-direction: column; }
.popup button { height: 17px; line-height: 17px; padding: 0 5px 0 24px; display: flex; justify-content: space-between; font-size: 9px; white-space: nowrap; }
.popup button:disabled { color: #999; }
.popup span { font-size: 15px; line-height: 14px; }
.popup .blank { height: 16px; }
.popup hr { margin: 2px 0 1px 20px; border: 0; border-top: 1px solid #ccc; width: 150px; }
.mark { position: absolute; border: 10px solid #f00; }
.mark-item { left: 517px; top: 352px; width: 177px; height: 36px; }
.mark-key { left: 501px; top: 414px; width: 37px; height: 37px; border-width: 11px; }
.callout { position: absolute; color: #fff; font-weight: 700; white-space: nowrap; font-feature-settings: normal; -webkit-text-stroke: 5px #000; paint-order: stroke fill; text-shadow: 3px 4px 2px #000; }
.callout-two { left: 356px; top: 228px; font-size: 40px; line-height: 58px; }
.callout-one { left: 337px; top: 446px; font-size: 37px; line-height: 54px; }
.pointer { position: absolute; left: 596px; top: 275px; width: 48px; height: 78px; }
```
